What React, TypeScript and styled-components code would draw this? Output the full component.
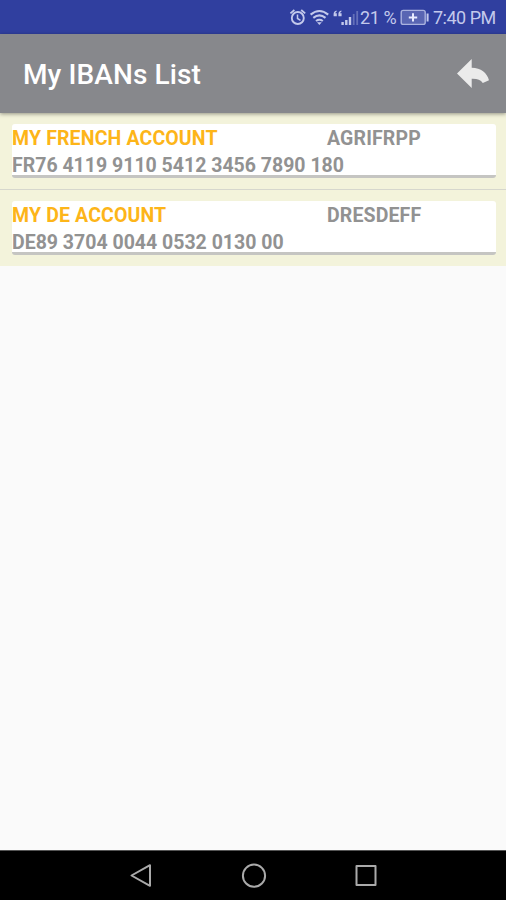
import React from "react";
import styled, { createGlobalStyle } from "styled-components";

const GlobalStyle = createGlobalStyle`
  * { box-sizing: border-box; }
  body { margin: 0; font-family: Roboto, "Liberation Sans", sans-serif; }
`;

const Screen = styled.div`
  display: flex;
  flex-direction: column;
  width: 506px;
  height: 900px;
  overflow: hidden;
  background: #fafafa;
`;

const StatusBar = styled.header`
  display: flex;
  flex: none;
  height: 34px;
  background: #303f9f;
  color: #c3c9ec;
  padding: 1px 10px 0 288px;
  align-items: center;
  font-size: 18px;
  line-height: 33px;
  white-space: nowrap;
`;

const StatusIcons = styled.svg`
  flex: none;
  display: block;
  width: 72px;
  height: 33px;
`;

const Percent = styled.span`
  flex: none;
  width: 40px;
  letter-spacing: -0.4px;
`;

const Battery = styled.svg`
  flex: none;
  width: 30px;
  height: 33px;
`;

const Clock = styled.span`
  margin-left: 3px;
  letter-spacing: -0.5px;
`;

const AppBar = styled.div`
  display: flex;
  flex: none;
  align-items: center;
  justify-content: space-between;
  height: 79px;
  padding: 0 16px 0 23px;
  background: #87888c;
  box-shadow: 0 1px 4px rgba(0, 0, 0, 0.4);
  z-index: 1;
`;

const Title = styled.h1`
  margin: 2px 0 0;
  color: #fff;
  font-size: 28px;
  font-weight: 500;
  line-height: 36px;
  letter-spacing: 0.1px;
  white-space: nowrap;
`;

const BackButton = styled.button`
  display: flex;
  padding: 0;
  border: 0;
  background: none;
`;

const List = styled.main`
  flex: 1;
`;

const Row = styled.section`
  height: 76px;
  padding: 11px 10px 11px 12px;
  background: #f3f3db;

  & + & {
    height: 77px;
    border-top: 1px solid #d6d7cd;
  }
`;

const Card = styled.article`
  height: 54px;
  padding-top: 1px;
  border-bottom: 3px solid #c5c5c2;
  border-radius: 3px;
  background: #fff;
  color: #929292;
  font-size: 19.5px;
  font-weight: 700;
  line-height: 27px;
  white-space: nowrap;
`;

const Heading = styled.div`
  display: grid;
  grid-template-columns: 315px 1fr;
  height: 27px;
  letter-spacing: 0.14px;
`;

const Name = styled.span`
  color: #fdb519;
`;

const NavBar = styled.nav`
  display: flex;
  flex: none;
  height: 50px;
  justify-content: space-between;
  padding: 0 127px 0 128px;
  align-items: center;
  border-top: 1px solid #555;
  background: #000;
`;

const NavIcon = styled.svg`
  width: 26px;
  height: 26px;
  fill: none;
  stroke: #aaa;
  stroke-width: 2;
  stroke-linejoin: round;
`;

const accounts = [
  { name: "MY FRENCH ACCOUNT", code: "AGRIFRPP", iban: "FR76 4119 9110 5412 3456 7890 180" },
  { name: "MY DE ACCOUNT", code: "DRESDEFF", iban: "DE89 3704 0044 0532 0130 00" },
];

export default function App() {
  return (
    <Screen>
      <GlobalStyle />
      <StatusBar>
        <StatusIcons viewBox="288 1 72 33" fill="none" stroke="#c3c9ec">
          <circle cx="297.8" cy="18" r="6" strokeWidth="1.9" />
          <path d="M297.5 14.5v4l3 1.8" strokeWidth="1.5" />
          <path d="M290.4 13.4l4-3.4M305.2 13.4l-4-3.4" strokeWidth="1.8" />
          <path d="M310.6 14.6q8.8-7.2 17.6 0M313.3 17.8q6.1-4.8 12.2 0M316 21q3.4-2.5 6.8 0" strokeWidth="2.1" />
          <path d="M317 22.2h4.8l-2.4 2.8z" fill="#c3c9ec" stroke="none" />
          <path d="M336.6 10.5q-3 .9-3 3.4v2.3h3.2v-3h-1.5q.2-1 1.3-1.4zM341.4 10.5q-3 .9-3 3.4v2.3h3.2v-3h-1.5q.2-1 1.3-1.4z" fill="#c3c9ec" stroke="none" />
          <path d="M342.6 22v3M346.3 20v5M350 17v8" strokeWidth="2.4" />
          <path d="M353.7 14v11M357.2 11v14" strokeWidth="1.8" stroke="#6570b9" />
        </StatusIcons>
        <Percent>21 %</Percent>
        <Battery viewBox="400 1 30 33">
          <rect x="401.2" y="10.4" width="24" height="14" rx="2" fill="#5965b3" stroke="#aab2df" strokeWidth="1.4" />
          <path d="M427.6 13.5v8" stroke="#c3c9ec" strokeWidth="2" />
          <path d="M413 13.2v8.4M408.8 17.4h8.4" stroke="#e8ebff" strokeWidth="2" />
        </Battery>
        <Clock>7:40 PM</Clock>
      </StatusBar>
      <AppBar>
        <Title>My IBANs List</Title>
        <BackButton aria-label="Back">
          <svg width="34" height="34" viewBox="456 57 34 34">
            <path d="M457 73.5L471.7 59v8.7C481 68 487 72.5 489 80.3L482.8 83C480.6 79.6 477 78.6 471.7 78.8V88z" fill="#ebebeb" />
          </svg>
        </BackButton>
      </AppBar>
      <List>
        {accounts.map((account) => (
          <Row key={account.code}>
            <Card>
              <Heading>
                <Name>{account.name}</Name>
                <span>{account.code}</span>
              </Heading>
              <div>{account.iban}</div>
            </Card>
          </Row>
        ))}
      </List>
      <NavBar>
        <NavIcon viewBox="0 0 26 26"><path d="M22 2.2v20.6L3.5 12.5z" /></NavIcon>
        <NavIcon viewBox="0 0 26 26"><circle cx="13" cy="12.7" r="11.1" /></NavIcon>
        <NavIcon viewBox="0 0 26 26"><path d="M3.5 3h19v19h-19z" /></NavIcon>
      </NavBar>
    </Screen>
  );
}
